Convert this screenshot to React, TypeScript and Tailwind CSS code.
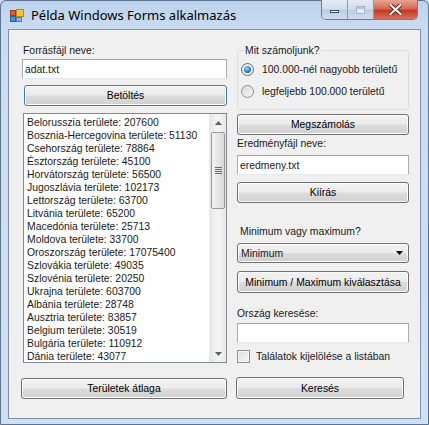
import React from "react";

const countries = [
  "Belorusszia területe: 207600",
  "Bosznia-Hercegovina területe: 51130",
  "Csehország területe: 78864",
  "Észtország területe: 45100",
  "Horvátország területe: 56500",
  "Jugoszlávia területe: 102173",
  "Lettország területe: 63700",
  "Litvánia területe: 65200",
  "Macedónia területe: 25713",
  "Moldova területe: 33700",
  "Oroszország területe: 17075400",
  "Szlovákia területe: 49035",
  "Szlovénia területe: 20250",
  "Ukrajna területe: 603700",
  "Albánia területe: 28748",
  "Ausztria területe: 83857",
  "Belgium területe: 30519",
  "Bulgária területe: 110912",
  "Dánia területe: 43077",
];

const btnBase =
  "flex items-center justify-center rounded-[3px] border bg-[linear-gradient(#f2f2f2_0%,#ebebeb_48%,#dddddd_52%,#cfcfcf_100%)] shadow-[inset_0_0_0_1px_#fbfbfb] text-black";

const Button = ({ label, className, focused }: { label: string; className: string; focused?: boolean }) => (
  <div
    className={`${btnBase} ${focused ? "border-[#3c7fb1] shadow-[inset_0_0_0_1px_#b9dcf3]" : "border-[#707070]"} ${className}`}
  >
    {label}
  </div>
);

const TextBox = ({ value, className }: { value: string; className: string }) => (
  <div
    className={`flex items-center bg-white border border-[#abadb3] border-t-[#a0a4ab] border-b-[#e3e9ef] px-[2px] ${className}`}
  >
    {value}
  </div>
);

const AppIcon = () => (
  <svg width="14" height="14" viewBox="0 0 14 14">
    <rect x="0.5" y="1.5" width="5" height="5" fill="#e8552f" stroke="#a8381c" />
    <rect x="6.5" y="0.5" width="7" height="7" fill="#f4c23a" stroke="#b68a19" />
    <rect x="0.5" y="7.5" width="5" height="5" fill="#4d8fdb" stroke="#2d5f9e" />
    <rect x="6.5" y="8.5" width="5" height="4" fill="#8ab6e8" stroke="#4a79b3" />
  </svg>
);

const Scrollbar = () => (
  <div className="w-[17px] h-full flex flex-col bg-[linear-gradient(90deg,#e6e6e6,#f4f4f4_40%,#f4f4f4_60%,#e6e6e6)] border-l border-[#eaeaea]">
    <div className="h-[17px] flex items-center justify-center">
      <svg width="7" height="4" viewBox="0 0 7 4">
        <path d="M0 4 L3.5 0 L7 4 Z" fill="#5f5f5f" />
      </svg>
    </div>
    <div className="mx-[1px] mt-[1px] h-[77px] rounded-[2px] border border-[#979797] bg-[linear-gradient(90deg,#f3f3f3,#e6e6e6_50%,#d8d8d8)] flex flex-col items-center justify-center gap-[1px]">
      <div className="w-[7px] h-[1px] bg-[#6c6c6c]" />
      <div className="w-[7px] h-[1px] bg-[#6c6c6c]" />
      <div className="w-[7px] h-[1px] bg-[#6c6c6c]" />
      <div className="w-[7px] h-[1px] bg-[#6c6c6c]" />
    </div>
    <div className="flex-1" />
    <div className="h-[17px] flex items-center justify-center">
      <svg width="7" height="4" viewBox="0 0 7 4">
        <path d="M0 0 L3.5 4 L7 0 Z" fill="#5f5f5f" />
      </svg>
    </div>
  </div>
);

export default function App() {
  return (
    <div className="w-[429px] h-[425px] bg-[#c9dbf0] font-['Liberation_Sans',Arial,sans-serif] text-[10.4px] leading-[13px] text-[#1a1a1a]">
      <div className="w-full h-full border border-[#5d7390] rounded-t-[6px] bg-[linear-gradient(#bcd2ec,#cadcf1_30px,#cfe0f3)] flex flex-col px-[7px] pb-[5px]">
        {/* title bar */}
        <div className="h-[28px] flex items-start">
          <div className="mt-[8px] ml-[2px]">
            <AppIcon />
          </div>
          <div className="ml-[7px] mt-[5px] font-['Noto_Sans',sans-serif] text-[13px] leading-[18px] text-black">
            Példa Windows Forms alkalmazás
          </div>
          <div className="ml-auto mr-[3px] -mt-[1px] flex h-[20px] rounded-b-[5px] border border-t-0 border-[#6a7d98] overflow-hidden">
            <div className="w-[26px] bg-[linear-gradient(#e3ebf5,#d2deec_45%,#bccde2_55%,#cfdcec)] border-r border-[#8b9bb2] flex items-center justify-center">
              <div className="w-[9px] h-[3px] bg-white border border-[#3d4d66] mt-[4px]" />
            </div>
            <div className="w-[26px] bg-[linear-gradient(#e3ebf5,#d2deec_45%,#bccde2_55%,#cfdcec)] border-r border-[#8b9bb2] flex items-center justify-center">
              <div className="w-[9px] h-[8px] border border-[#a6b4c8] bg-[#e4ebf4] shadow-[inset_0_2px_0_#b8c5d6]" />
            </div>
            <div className="w-[43px] bg-[linear-gradient(#e8a493,#d66a55_45%,#c43a25_55%,#d8705c)] flex items-center justify-center">
              <svg width="13" height="11" viewBox="0 0 13 11">
                <path d="M1.5 1 L11.5 10 M11.5 1 L1.5 10" stroke="#5b1e14" strokeWidth="4" strokeLinecap="round" />
                <path d="M1.5 1 L11.5 10 M11.5 1 L1.5 10" stroke="#ffffff" strokeWidth="2.2" strokeLinecap="round" />
              </svg>
            </div>
          </div>
        </div>

        {/* client area */}
        <div className="flex-1 bg-[#f0f0f0] border border-[#7f93ad] flex">
          {/* left column */}
          <div className="ml-[13px] w-[205px] flex flex-col">
            <div className="mt-[14px] h-[13px] pl-[1px]">Forrásfájl neve:</div>
            <TextBox value="adat.txt" className="mt-[2px] h-[20px]" />
            <Button label="Betöltés" focused className="mt-[6px] ml-[2px] h-[21px]" />
            <div className="mt-[7px] ml-[1px] h-[250px] border border-[#828790] bg-white flex">
              <div className="flex-1 pt-[2px] pl-[3px] overflow-hidden whitespace-nowrap">
                {countries.map((c) => (
                  <div key={c} className="h-[13px]">
                    {c}
                  </div>
                ))}
              </div>
              <Scrollbar />
            </div>
            <Button label="Területek átlaga" className="mt-[15px] -ml-[1px] h-[21px]" />
          </div>

          {/* right column */}
          <div className="ml-[9px] w-[173px] flex flex-col">
            <div className="relative mt-[20px] ml-[1px] h-[60px] w-[172px] border border-[#d5dfe5] rounded-[3px] flex flex-col">
              <div className="absolute -top-[7px] left-[6px] bg-[#f0f0f0] px-[1px] h-[13px]">Mit számoljunk?</div>
              <div className="mt-[12px] pl-[3px] flex items-center h-[13px]">
                <div className="w-[13px] h-[13px] rounded-full border border-[#5f6b7c] bg-[linear-gradient(135deg,#e8e8e8,#fbfbfb)] flex items-center justify-center">
                  <div className="w-[7px] h-[7px] rounded-full bg-[radial-gradient(circle_at_40%_35%,#9fd3ff,#2a77c4_60%,#15457d)]" />
                </div>
                <span className="ml-[8px]">100.000-nél nagyobb területű</span>
              </div>
              <div className="mt-[9px] pl-[3px] flex items-center h-[13px]">
                <div className="w-[13px] h-[13px] rounded-full border border-[#8e8f8f] bg-[linear-gradient(135deg,#d9d9d9,#f7f7f7)]" />
                <span className="ml-[8px]">legfeljebb 100.000 területű</span>
              </div>
            </div>
            <Button label="Megszámolás" className="mt-[4px] ml-[1px] h-[21px]" />
            <div className="mt-[2px] h-[13px] pl-[1px]">Eredményfájl neve:</div>
            <TextBox value="eredmeny.txt" className="mt-[5px] ml-[1px] h-[20px]" />
            <Button label="Kiírás" className="mt-[7px] ml-[1px] h-[21px]" />
            <div className="mt-[22px] h-[13px] pl-[4px]">Minimum vagy maximum?</div>
            <div className="mt-[5px] ml-[1px] h-[20px] rounded-[3px] border border-[#707070] bg-[linear-gradient(#f2f2f2_0%,#ebebeb_48%,#dddddd_52%,#cfcfcf_100%)] shadow-[inset_0_0_0_1px_#fbfbfb] flex items-center pl-[3px] pr-[5px]">
              <span className="flex-1">Minimum</span>
              <svg width="7" height="4" viewBox="0 0 7 4">
                <path d="M0 0 L3.5 4 L7 0 Z" fill="#000000" />
              </svg>
            </div>
            <Button label="Minimum / Maximum kiválasztása" className="mt-[8px] ml-[1px] h-[22px]" />
            <div className="mt-[14px] h-[13px] pl-[1px]">Ország keresése:</div>
            <TextBox value="" className="mt-[3px] ml-[1px] h-[20px]" />
            <div className="mt-[7px] ml-[1px] flex items-center h-[13px]">
              <div className="w-[13px] h-[13px] border border-[#8e8f8f] bg-[linear-gradient(135deg,#dcdcdc,#fafafa)] shadow-[inset_0_0_0_1px_#f4f4f4]" />
              <span className="ml-[6px]">Találatok kijelölése a listában</span>
            </div>
            <Button label="Keresés" className="mt-[14px] w-[168px] h-[22px]" />
          </div>
        </div>
      </div>
    </div>
  );
}
